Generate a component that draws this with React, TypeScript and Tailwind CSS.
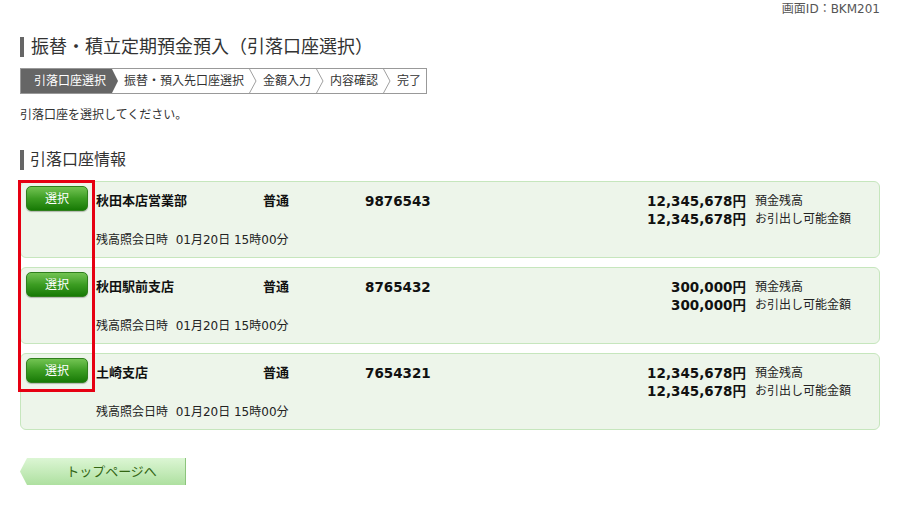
import { FC } from "react";

type Account = {
  branch: string;
  type: string;
  number: string;
  balance: string;
  available: string;
};

const accounts: Account[] = [
  { branch: "秋田本店営業部", type: "普通", number: "9876543", balance: "12,345,678円", available: "12,345,678円" },
  { branch: "秋田駅前支店", type: "普通", number: "8765432", balance: "300,000円", available: "300,000円" },
  { branch: "土崎支店", type: "普通", number: "7654321", balance: "12,345,678円", available: "12,345,678円" },
];

const steps = ["振替・預入先口座選択", "金額入力", "内容確認", "完了"];

const Chevron: FC = () => (
  <svg width="8" height="24" viewBox="0 0 8 24" className="shrink-0">
    <polyline points="0.5,0 7,12 0.5,24" fill="none" stroke="#a0a0a0" strokeWidth="1" />
  </svg>
);

const AccountCard: FC<{ account: Account }> = ({ account }) => {
  return (
    <div className="flex h-[77px] rounded-[6px] border border-[#c6e6bd] bg-[#edf5ea]">
      {/* select button */}
      <button
        type="button"
        className="ml-[5px] mt-[4px] h-[25px] w-[62px] shrink-0 rounded-[5px] border border-[#2f7f1c] bg-linear-to-b from-[#72c452] via-[#3c9d22] to-[#167a04] text-[12px] leading-[24px] text-white shadow-[0_1px_1px_rgba(0,0,0,0.25)]"
      >
        選択
      </button>

      {/* account info */}
      <div className="ml-[8px] flex flex-1 flex-col pt-[10px]">
        <div className="flex items-start text-[13px] leading-[18px] text-[#111]">
          <div className="w-[167px] font-bold">{account.branch}</div>
          <div className="w-[102px] font-bold">{account.type}</div>
          <div className="text-[13.5px] font-bold">{account.number}</div>
          <div className="flex-1" />
          <div className="mr-[24px] grid grid-cols-[auto_100px] gap-x-[9px]">
            <div className="text-right text-[13.5px] font-bold">{account.balance}</div>
            <div className="text-[12px] text-[#222]">預金残高</div>
            <div className="text-right text-[13.5px] font-bold">{account.available}</div>
            <div className="text-[12px] text-[#222]">お引出し可能金額</div>
          </div>
        </div>
        <div className="mt-[3px] text-[12px] leading-[18px] text-[#222]">
          残高照会日時&nbsp;&nbsp;01月20日 15時00分
        </div>
      </div>
    </div>
  );
};

export default function App() {
  return (
    <div
      className="min-h-[505px] w-full bg-white px-[20px] text-[#333]"
      style={{ fontFamily: '"DejaVu Sans", "Noto Sans CJK JP", sans-serif' }}
    >
      {/* screen id */}
      <div className="pt-[1px] text-right text-[12px] leading-[16px] text-[#555]">画面ID：BKM201</div>

      {/* title */}
      <h1 className="mt-[20px] border-l-[4px] border-[#666] pl-[7px] text-[18px] leading-[20px] text-[#333]">
        振替・積立定期預金預入（引落口座選択）
      </h1>

      {/* steps */}
      <div className="mt-[11px] flex h-[26px] w-fit items-center border border-[#999] text-[12px] text-[#333]">
        <div className="flex h-full items-center bg-[#666] pl-[13px] pr-[6px] text-white">引落口座選択</div>
        <svg width="6" height="24" viewBox="0 0 6 24" className="shrink-0">
          <polygon points="0,0 6,12 0,24" fill="#666" />
        </svg>
        {steps.map((s, i) => (
          <div key={s} className="flex h-full items-center">
            <span className="pl-[6px] pr-[5px]">{s}</span>
            {i < steps.length - 1 && <Chevron />}
          </div>
        ))}
      </div>

      <p className="mt-[12px] text-[12px] leading-[18px] text-[#333]">引落口座を選択してください。</p>

      {/* section heading */}
      <h2 className="mt-[26px] border-l-[4px] border-[#666] pl-[6px] text-[16px] leading-[20px] text-[#333]">
        引落口座情報
      </h2>

      {/* account list */}
      <div className="relative mt-[11px] flex flex-col gap-[9px]">
        {accounts.map((a) => (
          <AccountCard key={a.number} account={a} />
        ))}
        <div className="pointer-events-none absolute left-[-2px] top-[-1px] h-[212px] w-[77px] border-[3px] border-[#e60012]" />
      </div>

      {/* back to top */}
      <button
        type="button"
        className="mt-[28px] h-[27px] w-[166px] border-r border-[#8cc47c] bg-linear-to-b from-[#dcf6d4] to-[#aee0a0] pl-[18px] text-[13px] text-[#336614] [clip-path:polygon(7px_0,100%_0,100%_100%,7px_100%,0_50%)]"
      >
        トップページへ
      </button>
    </div>
  );
}
